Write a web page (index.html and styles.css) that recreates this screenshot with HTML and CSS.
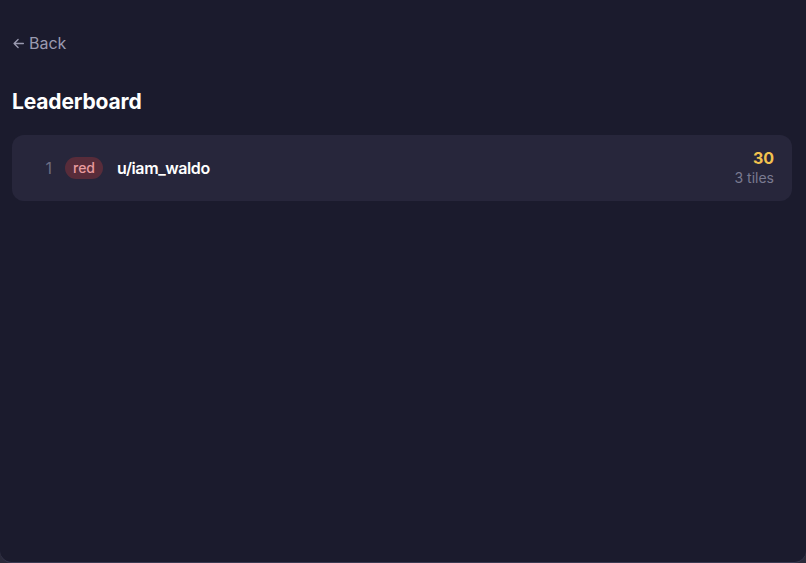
FILE: index.html
```html
<!DOCTYPE html>
<html>
<head>
<meta charset="utf-8">
<link rel="stylesheet" href="styles.css">
</head>
<body>
<div class="app">
  <a class="back" href="#">
    <svg class="back-icon" width="13" height="13" viewBox="0 0 16 16" fill="none" stroke="currentColor" stroke-width="1.6" stroke-linecap="round" stroke-linejoin="round"><path d="M14 8H2.5M7.5 3 2.5 8l5 5"/></svg>
    <span>Back</span>
  </a>
  <h1 class="title">Leaderboard</h1>
  <ul class="board">
    <li class="row">
      <span class="rank">1</span>
      <span class="team team-red">red</span>
      <span class="name">u/iam_waldo</span>
      <div class="stats">
        <span class="score">30</span>
        <span class="tiles">3 tiles</span>
      </div>
    </li>
  </ul>
</div>
</body>
</html>
```
FILE: styles.css
```css
* { box-sizing: border-box; }
html, body { margin: 0; height: 100%; background: #2a2a3a; }
body { font-family: Inter, "Noto Sans", sans-serif; }
.app {
  height: 563px;
  background: #1b1b2d;
  border-bottom: 1px solid #3a3a52;
  border-radius: 0 0 12px 12px;
  padding: 31px 14px 0 12px;
}
.back {
  display: inline-flex;
  align-items: center;
  gap: 4px;
  color: #9a9ab0;
  text-decoration: none;
  font-size: 16px;
  line-height: 24px;
}
.back-icon { margin-top: 1px; }
.title {
  margin: 33px 0 19px;
  font-size: 21px;
  line-height: 28px;
  font-weight: 700;
  color: #ffffff;
  letter-spacing: -0.15px;
}
.board { list-style: none; margin: 0; padding: 0; }
.row {
  display: flex;
  align-items: center;
  background: #27263b;
  border-radius: 12px;
  padding: 13px 18px 13px 16px;
}
.rank {
  width: 24px;
  text-align: right;
  color: #6c6c82;
  font-size: 16px;
}
.team {
  margin-left: 13px;
  padding: 3px 8px;
  border-radius: 11px;
  font-size: 14px;
  line-height: 16px;
  font-weight: 500;
}
.team-red { background: #582c3a; color: #e89a9e; }
.name {
  margin-left: 14px;
  color: #ffffff;
  font-size: 16px;
  font-weight: 600;
  letter-spacing: -0.4px;
}
.stats {
  margin-left: auto;
  display: flex;
  flex-direction: column;
  align-items: flex-end;
}
.score { color: #f2c14e; font-weight: 700; font-size: 16px; line-height: 20px; }
.tiles { color: #7a7a90; font-size: 14px; line-height: 20px; }
```
